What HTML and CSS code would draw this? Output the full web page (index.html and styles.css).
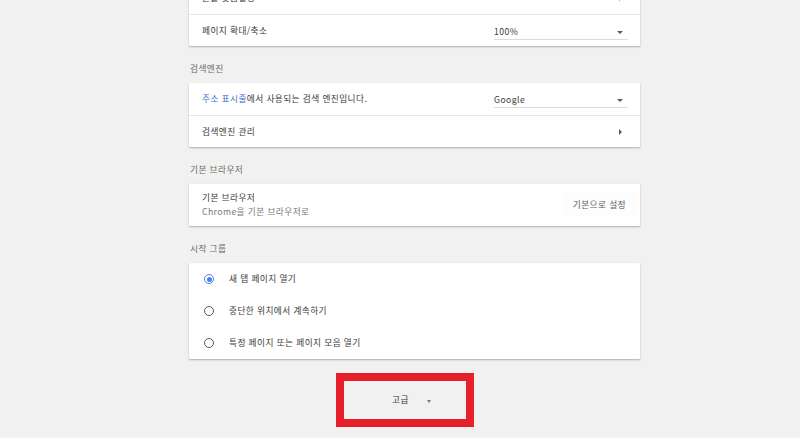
FILE: index.html
```html
<!DOCTYPE html>
<html lang="ko">
<head>
<meta charset="utf-8">
<link rel="stylesheet" href="styles.css">
</head>
<body>
<div class="page">
  <div class="card">
    <div class="row">
      <span class="label">글꼴 맞춤설정</span>
      <span class="chevron"></span>
    </div>
    <div class="row divided">
      <span class="label">페이지 확대/축소</span>
      <div class="select"><span>100%</span><span class="caret"></span></div>
    </div>
  </div>

  <div class="heading">검색엔진</div>
  <div class="card">
    <div class="row">
      <span class="label"><span class="link">주소 표시줄</span>에서 사용되는 검색 엔진입니다.</span>
      <div class="select"><span>Google</span><span class="caret"></span></div>
    </div>
    <div class="row divided">
      <span class="label">검색엔진 관리</span>
      <span class="chevron"></span>
    </div>
  </div>

  <div class="heading">기본 브라우저</div>
  <div class="card">
    <div class="row two-line">
      <div class="text-block">
        <div class="label">기본 브라우저</div>
        <div class="secondary">Chrome을 기본 브라우저로</div>
      </div>
      <span class="btn">기본으로 설정</span>
    </div>
  </div>

  <div class="heading">시작 그룹</div>
  <div class="card">
    <div class="radio-row">
      <span class="radio checked"></span>
      <span class="label">새 탭 페이지 열기</span>
    </div>
    <div class="radio-row">
      <span class="radio"></span>
      <span class="label">중단한 위치에서 계속하기</span>
    </div>
    <div class="radio-row">
      <span class="radio"></span>
      <span class="label">특정 페이지 또는 페이지 모음 열기</span>
    </div>
  </div>

  <div class="advanced">
    <span class="adv-text">고급</span>
    <span class="adv-caret"></span>
  </div>
</div>
</body>
</html>
```

FILE: styles.css
```css
html, body {
  margin: 0;
  padding: 0;
  background: #f1f1f1;
  height: 438px;
  overflow: hidden;
}

body {
  font-family: "Noto Sans CJK KR", "Noto Sans", sans-serif;
  font-size: 8.7px;
  letter-spacing: 0.4px;
  color: #3a3a3a;
}

.page {
  width: 451px;
  margin: -18px 0 0 189px;
}

.card {
  background: #ffffff;
  box-shadow: 0 1px 2px rgba(0, 0, 0, 0.28), 0 0 1px rgba(0, 0, 0, 0.06);
  border-radius: 1px;
}

.row {
  box-sizing: border-box;
  height: 32px;
  display: flex;
  align-items: center;
  padding: 0 12px 0 13px;
}

.row.divided {
  border-top: 1px solid #e9e9e9;
}

.label {
  line-height: 14px;
  white-space: nowrap;
}

.link {
  color: #3b6fd1;
}

.chevron {
  margin-left: auto;
  margin-right: 6px;
  width: 0;
  height: 0;
  border-top: 3px solid transparent;
  border-bottom: 3px solid transparent;
  border-left: 3px solid #5a5a5a;
}

.select {
  box-sizing: border-box;
  margin-left: auto;
  width: 134px;
  height: 17px;
  padding-top: 2px;
  display: flex;
  align-items: flex-start;
  border-bottom: 1px solid #dcdcdc;
  line-height: 14px;
  margin-top: 1px;
}

.caret {
  margin-left: auto;
  margin-right: 5px;
  margin-top: 6px;
  width: 0;
  height: 0;
  border-left: 3px solid transparent;
  border-right: 3px solid transparent;
  border-top: 3px solid #5a5a5a;
}

.heading {
  padding: 17px 0 8px 1px;
  line-height: 12px;
  color: #6a6a6a;
}

.row.two-line {
  height: 42px;
  padding-right: 3px;
}

.text-block {
  display: flex;
  flex-direction: column;
}

.secondary {
  line-height: 14px;
  color: #777777;
}

.btn {
  margin-left: auto;
  padding: 5px 11px;
  line-height: 14px;
  color: #5a5a5a;
  background: #fdfdfd;
  border-radius: 2px;
}

.radio-row {
  height: 32px;
  display: flex;
  align-items: center;
  padding-left: 15px;
}

.radio {
  box-sizing: border-box;
  width: 10px;
  height: 10px;
  border: 1.3px solid #5a5a5a;
  border-radius: 50%;
  margin-right: 15px;
  display: flex;
  align-items: center;
  justify-content: center;
}

.radio.checked {
  border-color: #4a80e8;
}

.radio.checked::after {
  content: "";
  width: 5px;
  height: 5px;
  border-radius: 50%;
  background: #4a80e8;
}

.advanced {
  box-sizing: border-box;
  margin: 14px 0 0 147px;
  width: 138px;
  height: 54px;
  border: 8px solid #e8202b;
  display: flex;
  align-items: center;
  padding-left: 48px;
}

.adv-text {
  line-height: 14px;
  color: #333333;
}

.adv-caret {
  margin-left: 18px;
  margin-top: 2px;
  width: 0;
  height: 0;
  border-left: 2.5px solid transparent;
  border-right: 2.5px solid transparent;
  border-top: 3px solid #777777;
}
```
